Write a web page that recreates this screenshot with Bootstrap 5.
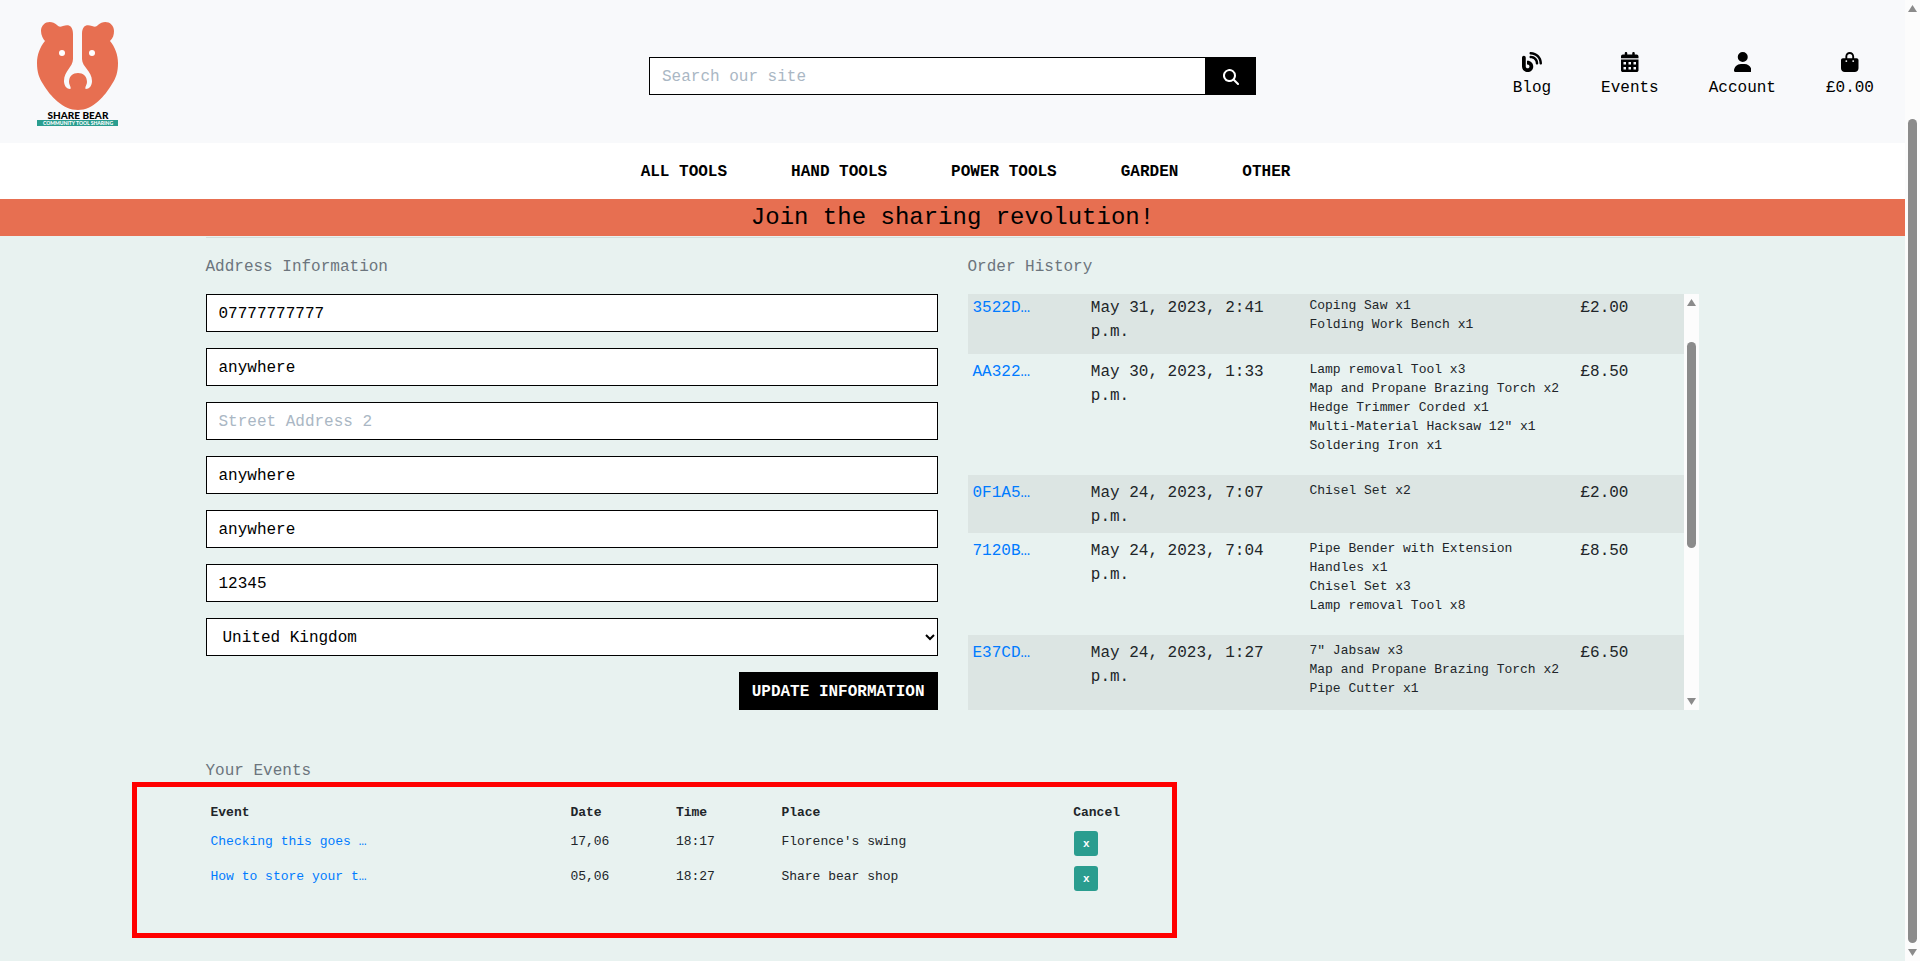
<!DOCTYPE html>
<html lang="en">
<head>
<meta charset="utf-8">
<meta name="viewport" content="width=device-width, initial-scale=1">
<title>Share Bear - My Profile</title>
<link rel="stylesheet" href="https://cdn.jsdelivr.net/npm/bootstrap@5.3.0/dist/css/bootstrap.min.css">
<style>
  :root { --coral: #e76f51; --teal: #2a9d8f; --mint: #e8f2f0; }
  body { font-family: "Liberation Mono", "DejaVu Sans Mono", monospace; font-size: 16px; line-height: 24px; color: #212529; background: var(--mint); }
  a { text-decoration: none; }
  .site-top { background: #f8f9fb; height: 143px; }
  .site-logo { width: 84px; margin: 8px 0 0 24px; }
  .form-control, .form-select { height: 38px; border: 1px solid #000; border-radius: 0; color: #000; padding: 7px 12px 5px; line-height: 24px; }
  .form-control::placeholder { color: #aab7c4; }
  .btn-ink { background: #000; color: #fff; border: 1px solid #000; border-radius: 0; height: 38px; padding: 7px 12px 5px; }
  .btn-ink:hover { background: #333; color: #fff; }
  .search-btn { width: 50px; }
  .top-links { gap: 50px; padding: 8px 34px 0 0; }
  .top-links a { color: #000; }
  .top-links svg { height: 20px; margin-bottom: 4px; fill: #000; }
  .main-menu { height: 56px; gap: 64px; padding: 2px 0 0 26px; background: #fff; }
  .main-menu a { color: #000; font-weight: bold; }
  .promo { background: var(--coral); color: #000; height: 37px; font-size: 24px; line-height: 38px; }
  .page-wrap { width: 80%; --bs-gutter-x: 30px; }
  .page-wrap .row, .site-top .row { --bs-gutter-x: 30px; }
  .page-rule { margin: 1px 0 0; opacity: .1; }
  .section-label { color: #6c757d; margin: 0 0 15px; padding-top: 1px; }
  .address-form { gap: 16px; }
  .country-select { background-color: #fff; background-image: none; appearance: none; padding-left: 16px; }
  .select-wrap svg { right: 3px; top: 15px; }
  .history { height: 416px; }
  .history-view { overflow: hidden; }
  .history-view table { margin-top: -4px; }
  .data-grid { table-layout: fixed; width: 100%; }
  .data-grid td, .data-grid th { padding: 5px; vertical-align: top; }
  .history-view.history-view td { padding: 6px 5px 4px; }
  .data-grid a { color: #007bff; }
  .history-view tbody tr:nth-child(odd) { background: rgba(0,0,0,.05); }
  .data-grid ul, .events-grid { font-size: 13px; line-height: 19px; }
  .data-grid ul { margin-bottom: 16px; }
  .btn-cancel { display: block; width: 24px; height: 25px; margin: -1px 0 1px 1px; padding: 0; border: 0; border-radius: 3px; background: var(--teal); color: #fff; font-size: 11px; font-weight: bold; line-height: 22px; }
  .events-block { padding-top: 48px; }
  .highlight-box { inset: 24px 15px -41px -74px; border: 5px solid #f00; pointer-events: none; }
  .scroll-rail { width: 15px; background: #fcfcfc; padding: 5px 0; align-items: center; }
  .scroll-rail svg { width: 9px; height: 7px; fill: #8b8b8b; flex: none; }
  .scroll-rail span { width: 9px; border-radius: 5px; background: #8b8b8b; }
  .page-rail .before { flex: 107; } .page-rail .thumb { flex: 824; } .page-rail .after { flex: 6; }
  .history-rail .before { flex: 36; } .history-rail .thumb { flex: 205; } .history-rail .after { flex: 150; }
</style>
</head>
<body>
<div class="d-flex min-vh-100">
  <div class="flex-grow-1">
    <header class="site-top container-fluid">
      <div class="row h-100 align-items-center">
        <div class="col-4">
          <a href="#" class="d-block" aria-label="Share Bear home">
            <svg class="site-logo d-block" viewBox="0 0 84 110" role="img" aria-label="Share Bear community tool sharing">
              <path fill="#e76f51" d="M37 13C37 4 32 3 27 5C24 6 23 6 21 4C15-2 5 1 5 10C5 14 7 18 9 20C4 26 1 34 1 42C1 51 3 57 7 63C14 75 27 89 42 89C57 89 69 75 76 63C80 57 82 51 82 42C82 34 79 26 74 20C77 17 78 14 78 10C78 1 68-2 62 4C60 6 59 6 56 5C51 3 46 4 46 13V38C46 46 56 50 56 60C56 65 53 68 50 68C48 67 51 64 51 61C51 55 47 52 42 52C37 52 33 55 33 61C33 64 36 67 34 68C31 68 28 65 28 60C28 50 37 46 37 38Z"/>
              <circle cx="26" cy="32" r="3" fill="#fff"/><circle cx="56" cy="32" r="3" fill="#fff"/>
              <text x="42" y="98" text-anchor="middle" font-family="Lato, sans-serif" font-weight="900" font-size="10">SHARE BEAR</text>
              <rect x="1" y="99" width="81" height="6" fill="#2a9d8f"/>
              <text x="42" y="104" text-anchor="middle" font-family="Lato, sans-serif" font-weight="900" font-size="5" fill="#fff">COMMUNITY TOOL SHARING</text>
            </svg>
          </a>
        </div>
        <div class="col-4">
          <form class="d-flex mb-0 pt-2" role="search">
            <input class="form-control" type="search" placeholder="Search our site" aria-label="Search our site">
            <button class="btn-ink search-btn flex-shrink-0" type="button" aria-label="Search">
              <svg class="d-block mx-auto" width="16" height="16" viewBox="0 0 512 512" fill="#fff"><path d="M416 208c0 46-15 88-40 123l127 126c12 13 12 33 0 46s-33 12-46 0L331 376a208 208 0 1 1 85-168zM208 352a144 144 0 1 0 0-288 144 144 0 0 0 0 288z"/></svg>
            </button>
          </form>
        </div>
        <nav class="col-4 d-flex justify-content-end top-links text-center" aria-label="Account">
          <a href="#"><svg class="d-block mx-auto" viewBox="0 0 512 512"><path d="M192 32c0 17.700 14.300 32 32 32 123.700 0 224 100.300 224 224 0 17.700 14.300 32 32 32s32-14.300 32-32C512 128.900 383.100 0 224 0c-17.700 0-32 14.300-32 32zm0 96c0 17.700 14.300 32 32 32 70.700 0 128 57.300 128 128 0 17.700 14.300 32 32 32s32-14.300 32-32c0-106-86-192-192-192-17.700 0-32 14.300-32 32zM96 144c0-26.500-21.500-48-48-48S0 117.500 0 144v224c0 79.500 64.500 144 144 144s144-64.500 144-144-64.500-144-144-144h-16v96h16c26.500 0 48 21.500 48 48s-21.500 48-48 48-48-21.500-48-48z"/></svg>Blog</a>
          <a href="#"><svg class="d-block mx-auto" viewBox="0 0 448 512"><path fill-rule="evenodd" d="M96 32v32H48C21.500 64 0 85.500 0 112v48h448v-48c0-26.500-21.500-48-48-48h-48V32c0-17.700-14.300-32-32-32s-32 14.300-32 32v32H160V32c0-17.700-14.300-32-32-32S96 14.300 96 32zM0 192v272c0 26.500 21.500 48 48 48h352c26.500 0 48-21.500 48-48V192zM64 256h64v64H64zm128 0h64v64h-64zm128 0h64v64h-64zM64 384h64v64H64zm128 0h64v64h-64zm128 0h64v64h-64z"/></svg>Events</a>
          <a href="#"><svg class="d-block mx-auto" viewBox="0 0 448 512"><path d="M224 256a128 128 0 1 0 0-256 128 128 0 0 0 0 256zm-46 48C80 304 0 384 0 482c0 16 13 30 30 30h388c17 0 30-14 30-30 0-98-80-178-178-178z"/></svg>Account</a>
          <a href="#"><svg class="d-block mx-auto" viewBox="0 0 448 512"><path fill-rule="evenodd" d="M112 112C112 50 162 0 224 0s112 50 112 112v48h64c26 0 48 22 48 48v208c0 53-43 96-96 96H96c-53 0-96-43-96-96V208c0-26 22-48 48-48h64zm48 48h128v-48a64 64 0 0 0-128 0zM136 256a24 24 0 1 0 0-48 24 24 0 0 0 0 48zm176 0a24 24 0 1 0 0-48 24 24 0 0 0 0 48z"/></svg>£0.00</a>
        </nav>
      </div>
    </header>
    <nav class="main-menu d-flex justify-content-center align-items-center" aria-label="Tools">
      <a href="#">ALL TOOLS</a><a href="#">HAND TOOLS</a><a href="#">POWER TOOLS</a><a href="#">GARDEN</a><a href="#">OTHER</a>
    </nav>
    <div class="promo text-center">Join the sharing revolution!</div>

    <main class="page-wrap container-fluid">
      <hr class="page-rule">
      <div class="row pt-3">
        <div class="col-6">
          <h2 class="section-label fs-6 lh-base fw-normal">Address Information</h2>
          <form class="address-form d-flex flex-column">
            <input class="form-control" type="text" value="07777777777" aria-label="Phone Number">
            <input class="form-control" type="text" value="anywhere" aria-label="Street Address 1">
            <input class="form-control" type="text" placeholder="Street Address 2" aria-label="Street Address 2">
            <input class="form-control" type="text" value="anywhere" aria-label="Town or City">
            <input class="form-control" type="text" value="anywhere" aria-label="County">
            <input class="form-control" type="text" value="12345" aria-label="Postal Code">
            <div class="select-wrap position-relative">
              <select class="form-select country-select" aria-label="Country"><option>United Kingdom</option></select>
              <svg class="position-absolute" width="10" height="8" viewBox="0 0 10 8" fill="none" stroke="#000" stroke-width="2"><path d="M1 2l4 4 4-4"/></svg>
            </div>
            <button class="btn-ink align-self-end fw-bold" type="button">UPDATE INFORMATION</button>
          </form>
        </div>
        <div class="col-6">
          <h2 class="section-label fs-6 lh-base fw-normal">Order History</h2>
          <div class="history d-flex">
            <div class="history-view flex-grow-1">
              <table class="data-grid" aria-label="Order History">
                <colgroup><col style="width:16.500%"><col style="width:30.500%"><col style="width:37.800%"><col></colgroup>
                <tbody>
                  <tr><td><a href="#">3522D…</a></td><td>May 31, 2023, 2:41 p.m.</td><td><ul class="list-unstyled"><li>Coping Saw x1</li><li>Folding Work Bench x1</li></ul></td><td>£2.00</td></tr>
                  <tr><td><a href="#">AA322…</a></td><td>May 30, 2023, 1:33 p.m.</td><td><ul class="list-unstyled"><li>Lamp removal Tool x3</li><li>Map and Propane Brazing Torch x2</li><li>Hedge Trimmer Corded x1</li><li>Multi-Material Hacksaw 12" x1</li><li>Soldering Iron x1</li></ul></td><td>£8.50</td></tr>
                  <tr><td><a href="#">0F1A5…</a></td><td>May 24, 2023, 7:07 p.m.</td><td><ul class="list-unstyled"><li>Chisel Set x2</li></ul></td><td>£2.00</td></tr>
                  <tr><td><a href="#">7120B…</a></td><td>May 24, 2023, 7:04 p.m.</td><td><ul class="list-unstyled"><li>Pipe Bender with Extension Handles x1</li><li>Chisel Set x3</li><li>Lamp removal Tool x8</li></ul></td><td>£8.50</td></tr>
                  <tr><td><a href="#">E37CD…</a></td><td>May 24, 2023, 1:27 p.m.</td><td><ul class="list-unstyled"><li>7" Jabsaw x3</li><li>Map and Propane Brazing Torch x2</li><li>Pipe Cutter x1</li></ul></td><td>£6.50</td></tr>
                </tbody>
              </table>
            </div>
            <div class="scroll-rail history-rail d-flex flex-column flex-shrink-0" aria-hidden="true">
              <svg viewBox="0 0 9 7"><path d="M4.500 0L9 7H0z"/></svg><div class="before"></div><span class="thumb"></span><div class="after"></div><svg viewBox="0 0 9 7"><path d="M4.500 7L9 0H0z"/></svg>
            </div>
          </div>
        </div>
      </div>
      <div class="row events-block">
        <div class="col-8">
          <div class="position-relative">
            <h2 class="section-label fs-6 lh-base fw-normal">Your Events</h2>
            <table class="data-grid events-grid" aria-label="Your Events">
              <colgroup><col style="width:36.500%"><col style="width:10.700%"><col style="width:10.700%"><col style="width:29.600%"><col></colgroup>
              <thead><tr><th scope="col">Event</th><th scope="col">Date</th><th scope="col">Time</th><th scope="col">Place</th><th scope="col">Cancel</th></tr></thead>
              <tbody>
                <tr><td><a href="#">Checking this goes …</a></td><td>17,06</td><td>18:17</td><td>Florence's swing</td><td><button class="btn-cancel" type="button" aria-label="Cancel Checking this goes">x</button></td></tr>
                <tr><td><a href="#">How to store your t…</a></td><td>05,06</td><td>18:27</td><td>Share bear shop</td><td><button class="btn-cancel" type="button" aria-label="Cancel How to store your tools">x</button></td></tr>
              </tbody>
            </table>
            <div class="highlight-box position-absolute"></div>
          </div>
        </div>
      </div>
    </main>
  </div>
  <div class="scroll-rail page-rail d-flex flex-column flex-shrink-0" aria-hidden="true">
    <svg viewBox="0 0 9 7"><path d="M4.500 0L9 7H0z"/></svg><div class="before"></div><span class="thumb"></span><div class="after"></div><svg viewBox="0 0 9 7"><path d="M4.500 7L9 0H0z"/></svg>
  </div>
</div>
<script src="https://cdn.jsdelivr.net/npm/bootstrap@5.3.0/dist/js/bootstrap.bundle.min.js"></script>
</body>
</html>
